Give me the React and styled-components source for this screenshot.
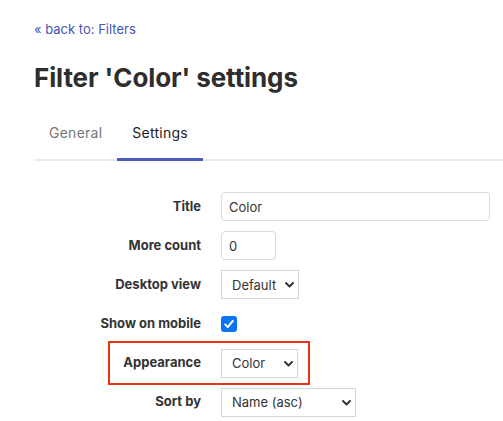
import React from 'react';
import styled, { createGlobalStyle } from 'styled-components';

const GlobalStyle = createGlobalStyle`
  html, body {
    margin: 0;
    padding: 0;
    background: #fff;
  }
  body {
    font-family: Inter, "Noto Sans", Arial, sans-serif;
    color: #333;
    overflow: hidden;
  }
`;

const Page = styled.div`
  padding: 20px 0 0 34px;
`;

const BackLink = styled.a`
  display: block;
  font-size: 13px;
  line-height: 19.5px;
  color: #4656b8;
  text-decoration: none;
  cursor: pointer;
`;

const Heading = styled.h1`
  margin: 22px 0 0;
  font-size: 26px;
  line-height: 31px;
  font-weight: 700;
  color: #2e2e2e;
  letter-spacing: -0.1px;
`;

const TabBar = styled.div`
  display: flex;
  margin-top: 15.5px;
  border-bottom: 2px solid #ebebeb;
`;

const Tab = styled.div`
  padding: 15px 15px;
  margin-bottom: -2px;
  font-size: 14px;
  line-height: 20px;
  letter-spacing: 0.25px;
  color: ${(p) => (p.$active ? '#222' : '#777')};
  border-bottom: 3px solid ${(p) => (p.$active ? '#4a5bbd' : 'transparent')};
  cursor: pointer;
`;

const Form = styled.form`
  display: flex;
  flex-direction: column;
  gap: 10.2px;
  padding-top: 31px;
`;

const Row = styled.div`
  position: relative;
  display: grid;
  grid-template-columns: 167px 1fr;
  column-gap: 20px;
  align-items: center;
  height: 29px;

  ${(p) =>
    p.$highlight &&
    `
    &::after {
      content: "";
      position: absolute;
      left: 74px;
      top: -8px;
      width: 198px;
      height: 40px;
      border: 2px solid #ec3117;
      pointer-events: none;
    }
  `}
`;

const Label = styled.label`
  text-align: right;
  font-size: 13px;
  font-weight: 700;
  color: #333;
  padding-bottom: 2px;
`;

const TextInput = styled.input`
  box-sizing: border-box;
  width: ${(p) => p.$width}px;
  height: 29px;
  padding: 0 7px;
  border: 1px solid #dadada;
  border-radius: 4px;
  font-family: inherit;
  font-size: 13px;
  color: #333;
  background: #fff;
  outline: none;
`;

const SelectWrap = styled.div`
  position: relative;
  width: ${(p) => p.$width}px;
  height: 29px;
`;

const Select = styled.select`
  appearance: none;
  box-sizing: border-box;
  width: 100%;
  height: 100%;
  padding: 0 0 0 10px;
  border: 1px solid #d6d6d6;
  border-radius: 0;
  background: #fff;
  font-family: inherit;
  font-size: 13px;
  color: #333;
  outline: none;
`;

const Chevron = styled.svg`
  position: absolute;
  right: 5px;
  top: 12px;
  width: 9px;
  height: 6px;
  pointer-events: none;
`;

const CheckWrap = styled.span`
  position: relative;
  display: inline-block;
  width: 16px;
  height: 16px;
`;

const CheckInput = styled.input`
  appearance: none;
  margin: 0;
  width: 16px;
  height: 16px;
  border-radius: 3px;
  background: #0b74f4;
  display: block;
`;

const CheckMark = styled.svg`
  position: absolute;
  left: 2px;
  top: 2px;
  width: 12px;
  height: 12px;
  pointer-events: none;
`;

const Dropdown = ({ width, value, options }) => (
  <SelectWrap $width={width}>
    <Select defaultValue={value}>
      {options.map((o) => (
        <option key={o}>{o}</option>
      ))}
    </Select>
    <Chevron viewBox="0 0 9 6">
      <polyline points="1,1 4.5,4.5 8,1" fill="none" stroke="#333" strokeWidth="1.9" strokeLinecap="round" strokeLinejoin="round" />
    </Chevron>
  </SelectWrap>
);

const App = () => {
  return (
    <Page>
      <GlobalStyle />
      <BackLink>« back to: Filters</BackLink>
      <Heading>Filter 'Color' settings</Heading>
      <TabBar>
        <Tab>General</Tab>
        <Tab $active>Settings</Tab>
      </TabBar>
      <Form>
        <Row>
          <Label>Title</Label>
          <TextInput $width={269} defaultValue="Color" />
        </Row>
        <Row>
          <Label>More count</Label>
          <TextInput $width={55} defaultValue="0" />
        </Row>
        <Row>
          <Label>Desktop view</Label>
          <Dropdown width={78} value="Default" options={['Default', 'List']} />
        </Row>
        <Row>
          <Label>Show on mobile</Label>
          <CheckWrap>
            <CheckInput type="checkbox" defaultChecked />
            <CheckMark viewBox="0 0 12 12">
              <polyline points="2.2,6.4 4.8,9 9.8,2.8" fill="none" stroke="#fff" strokeWidth="2" strokeLinecap="round" strokeLinejoin="round" />
            </CheckMark>
          </CheckWrap>
        </Row>
        <Row $highlight>
          <Label>Appearance</Label>
          <Dropdown width={77} value="Color" options={['Color', 'Text']} />
        </Row>
        <Row>
          <Label>Sort by</Label>
          <Dropdown width={135} value="Name (asc)" options={['Name (asc)', 'Name (desc)']} />
        </Row>
      </Form>
    </Page>
  );
};

export default App;
